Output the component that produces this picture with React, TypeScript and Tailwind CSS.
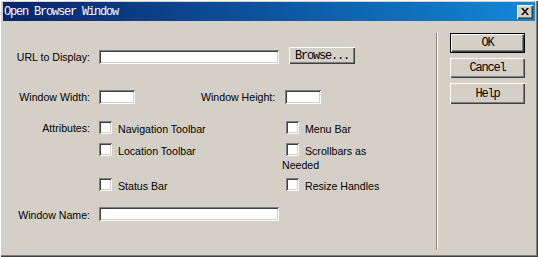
import { ReactNode } from "react";

const raised =
  "shadow-[inset_1px_1px_#ffffff,inset_-1px_-1px_#404040,inset_-2px_-2px_#808080]";
const sunken =
  "shadow-[inset_1px_1px_#808080,inset_-1px_-1px_#ffffff,inset_2px_2px_#404040,inset_-2px_-2px_#d4d0c8]";

const mono = "font-['Liberation_Mono',monospace] text-[12px] tracking-[-1.2px]";

function TextBox(props: { className: string }) {
  return <div className={`bg-white h-[14px] ${sunken} ${props.className}`} />;
}

function Check(props: { children: ReactNode; className?: string }) {
  return (
    <div className={`flex items-start ${props.className || ""}`}>
      <div className={`w-[13px] h-[13px] shrink-0 bg-white ${sunken}`} />
      <span className="ml-[6px] mt-[2px] leading-[13px]">{props.children}</span>
    </div>
  );
}

function Button(props: { label: string; def?: boolean; className?: string }) {
  if (props.def) {
    return (
      <div className={`border border-black ${props.className || ""}`}>
        <div
          className={`h-full flex items-center justify-center text-black ${mono} ${raised}`}
        >
          {props.label}
        </div>
      </div>
    );
  }
  return (
    <div
      className={`flex items-center justify-center text-black ${mono} ${raised} ${props.className || ""}`}
    >
      {props.label}
    </div>
  );
}

export default function App() {
  return (
    <div
      className={`w-[538px] h-[257px] bg-[#d4d0c8] flex flex-col px-[3px] pt-[2px] pb-[3px] shadow-[inset_1px_1px_#ffffff,inset_-1px_-1px_#404040,inset_-2px_-2px_#808080] font-['Liberation_Sans',Arial,sans-serif] text-[10.6px] text-black`}
    >
      {/* title bar */}
      <div className="h-[19px] shrink-0 flex items-center justify-between bg-gradient-to-r from-[#0a246a] to-[#1288d8] pl-[1px] pr-[2px]">
        <span className={`text-white ${mono} leading-[12px]`}>Open Browser Window</span>
        <div
          className={`w-[16px] h-[14px] bg-[#d4d0c8] flex items-center justify-center ${raised}`}
        >
          <svg width="8" height="7" viewBox="0 0 8 7">
            <path d="M0 0h2l2 2.5L6 0h2L5 3.5 8 7H6L4 4.5 2 7H0l3-3.5z" fill="#000" />
          </svg>
        </div>
      </div>

      <div className="flex flex-1">
        {/* form */}
        <div className="w-[433px] pt-[26px]">
          <div className="flex h-[17px]">
            <div className="w-[87px] text-right mt-[4px] leading-[13px]">URL to Display:</div>
            <TextBox className="ml-[9px] mt-[3px] w-[180px]" />
            <Button label="Browse..." className="ml-[10px] w-[66px] h-[17px]" />
          </div>

          <div className="flex h-[14px] mt-[26px]">
            <div className="w-[87px] text-right mt-[1px] leading-[13px]">Window Width:</div>
            <TextBox className="ml-[9px] w-[36px]" />
            <div className="ml-[66px] w-[84px] mt-[1px] leading-[13px]">Window Height:</div>
            <TextBox className="w-[36px]" />
          </div>

          <div className="flex mt-[17px]">
            <div className="w-[87px] text-right mt-[1px] leading-[13px]">Attributes:</div>
            <Check className="ml-[9px] w-[187px]">Navigation Toolbar</Check>
            <Check>Menu Bar</Check>
          </div>

          <div className="flex mt-[7px]">
            <Check className="ml-[96px] w-[183px]">Location Toolbar</Check>
            <div>
              <Check className="ml-[4px]">Scrollbars as</Check>
              <div className="leading-[13px] mt-[1px]">Needed</div>
            </div>
          </div>

          <div className="flex mt-[6px]">
            <Check className="ml-[96px] w-[187px]">Status Bar</Check>
            <Check>Resize Handles</Check>
          </div>

          <div className="flex h-[14px] mt-[14px]">
            <div className="w-[87px] text-right mt-[2px] leading-[13px]">Window Name:</div>
            <TextBox className="ml-[9px] w-[180px]" />
          </div>
        </div>

        {/* separator */}
        <div className="mt-[12px] mb-[4px] w-[2px] border-l border-l-[#808080] border-r border-r-white" />

        {/* buttons */}
        <div className="flex flex-col pt-[12px] pl-[12px]">
          <Button label="OK" def className="w-[75px] h-[20px]" />
          <Button label="Cancel" className="w-[75px] h-[20px] mt-[5px]" />
          <Button label="Help" className="w-[75px] h-[21px] mt-[5px]" />
        </div>
      </div>
    </div>
  );
}
